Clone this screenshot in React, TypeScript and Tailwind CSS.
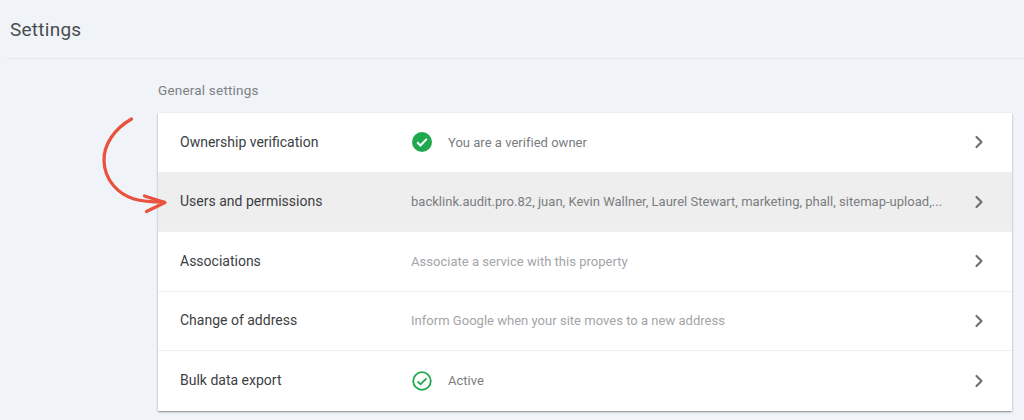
import { ChevronRight } from "lucide-react";

type RowProps = {
  label: string;
  value: string;
  icon?: "filled" | "outline";
  tone?: "normal" | "muted";
  highlighted?: boolean;
};

const FilledCheck = () => (
  <svg width="20" height="20" viewBox="0 0 20 20" className="shrink-0">
    <circle cx="10" cy="10" r="10" fill="#1fa94f" />
    <path d="M5.2 10.3l3.2 3.2 6.4-6.6" fill="none" stroke="#fff" strokeWidth="2" />
  </svg>
);

const OutlineCheck = () => (
  <svg width="20" height="20" viewBox="0 0 20 20" className="shrink-0">
    <circle cx="10" cy="10" r="8.8" fill="none" stroke="#1fa94f" strokeWidth="1.8" />
    <path d="M5.6 10.3l3 3 5.8-6" fill="none" stroke="#1fa94f" strokeWidth="1.8" />
  </svg>
);

const Row = ({ label, value, icon, tone = "normal", highlighted }: RowProps) => {
  return (
    <div
      className={`flex h-[59.5px] items-center border-b border-[#f1f1f1] last:border-b-0 pl-[22px] pr-[23px] ${
        highlighted ? "bg-[#eeeeee]" : "bg-white"
      }`}
    >
      <span className="w-[232px] shrink-0 text-[14px] text-[#3c4043]">{label}</span>
      {icon === "filled" && <FilledCheck />}
      {icon === "outline" && <OutlineCheck />}
      <span
        className={`min-w-0 flex-1 whitespace-nowrap text-[13px] tracking-[0.02px] ${
          icon ? "ml-[16px]" : "-ml-[1px]"
        } ${tone === "muted" ? "text-[#a3a5a8]" : "text-[#7a7d80]"}`}
      >
        {value}
      </span>
      <ChevronRight size={20} strokeWidth={2.6} className="ml-[24px] shrink-0 text-[#6f7174]" />
    </div>
  );
};

const App = () => {
  return (
    <div className="relative h-[420px] w-[1024px] overflow-hidden bg-[#f0f3f8] font-['Roboto',sans-serif]">
      <div className="ml-[6px] h-[59px] border-b border-[#e6e8ec] pl-[4px] pt-[18px] text-[19px] leading-[24px] tracking-[0.25px] text-[#4a4d50]">
        Settings
      </div>
      <div className="pl-[158px] pr-[12px]">
        <div className="h-[54px] pt-[22px] text-[13.5px] leading-[18px] tracking-[0.2px] text-[#7d8083]">
          General settings
        </div>
        <div className="rounded-[1px] shadow-[0_1px_2px_rgba(60,64,67,0.6)]">
          <Row label="Ownership verification" value="You are a verified owner" icon="filled" />
          <Row
            label="Users and permissions"
            value="backlink.audit.pro.82, juan, Kevin Wallner, Laurel Stewart, marketing, phall, sitemap-upload,..."
            highlighted
          />
          <Row label="Associations" value="Associate a service with this property" tone="muted" />
          <Row label="Change of address" value="Inform Google when your site moves to a new address" tone="muted" />
          <Row label="Bulk data export" value="Active" icon="outline" />
        </div>
      </div>
      {/* hand drawn arrow over the card edge */}
      <svg
        className="absolute left-[90px] top-[105px]"
        width="90"
        height="120"
        viewBox="0 0 90 120"
        fill="none"
        stroke="#e8523f"
        strokeWidth="3.2"
        strokeLinecap="round"
        strokeLinejoin="round"
      >
        <path d="M41.5 14C24 24 13.5 40 14 56c.6 19 14 33 30 38 9 2.800 19 3 30 3" />
        <path d="M54.500 91 75 97.500 56.500 106.500" />
      </svg>
    </div>
  );
};

export default App;
